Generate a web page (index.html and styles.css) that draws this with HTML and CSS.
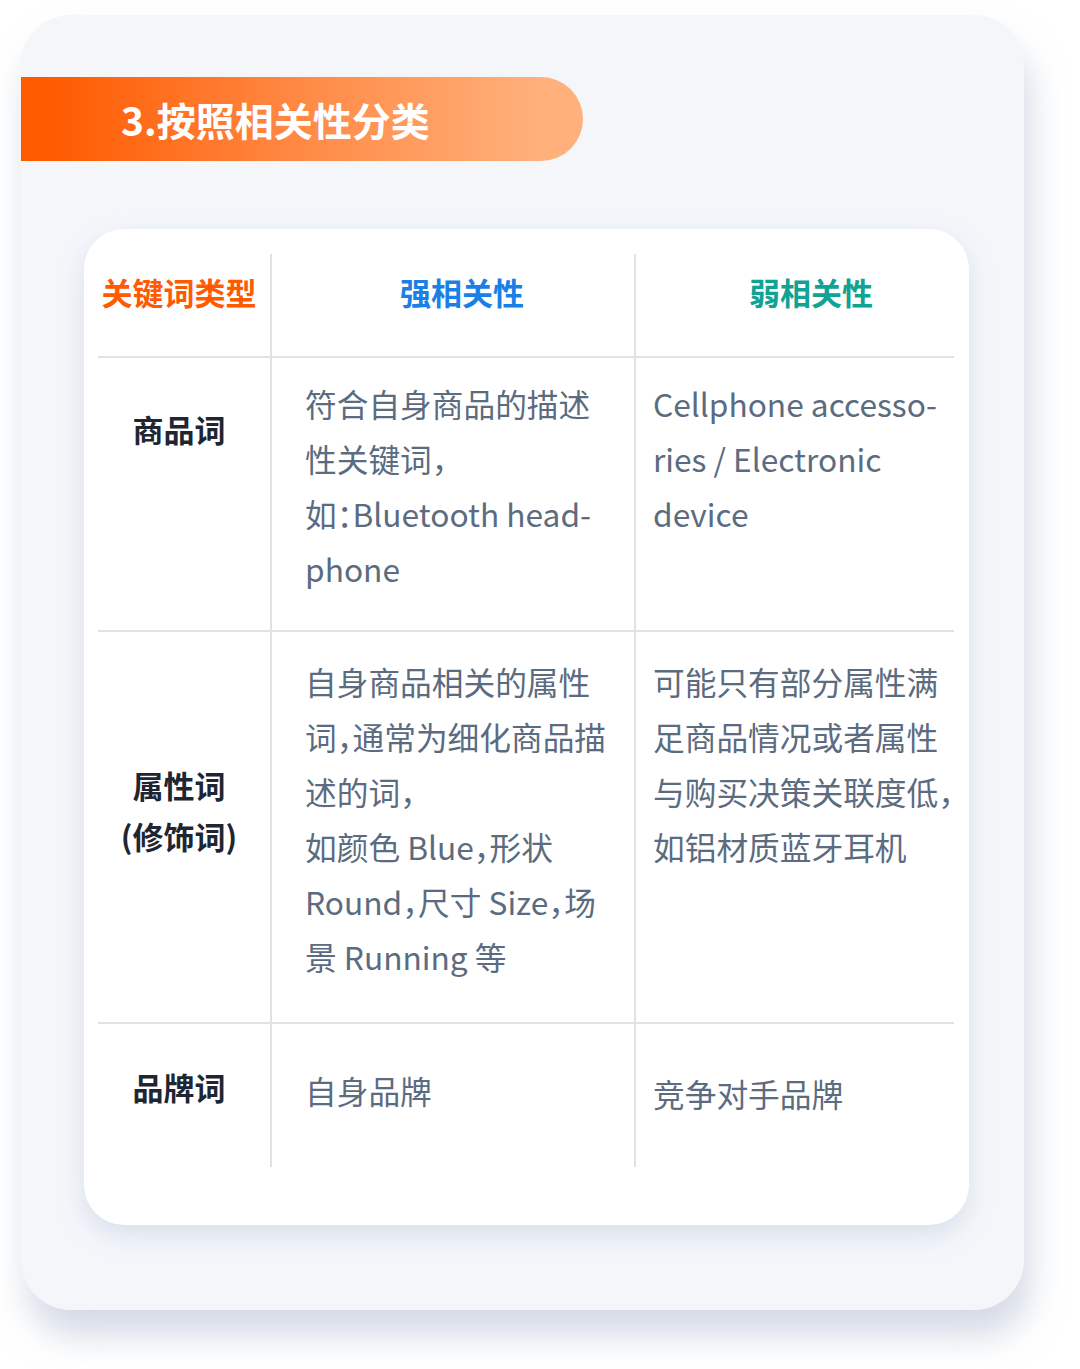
FILE: index.html
```html
<!DOCTYPE html>
<html lang="zh-CN">
<head>
  <meta charset="UTF-8">
  <title>按照相关性分类</title>
  <link rel="stylesheet" href="styles.css">
</head>
<body>

<div class="card">
  <div class="banner">3.按照相关性分类</div>

  <div class="panel">
    <div class="grid">
      <div class="cell head key">关键词类型</div>
      <div class="cell head strong">强相关性</div>
      <div class="cell head weak">弱相关性</div>

      <div class="cell label row1">商品词</div>
      <div class="cell text mid row1">符合自身商品的描述<br>性关键词，<br>如：Bluetooth head-<br>phone</div>
      <div class="cell text end row1">Cellphone accesso-<br>ries / Electronic<br>device</div>

      <div class="cell label row2">属性词<br>(修饰词)</div>
      <div class="cell text mid row2">自身商品相关的属性<br>词，通常为细化商品描<br>述的词，<br>如颜色 Blue，形状<br>Round，尺寸 Size，场<br>景 Running 等</div>
      <div class="cell text end row2">可能只有部分属性满<br>足商品情况或者属性<br>与购买决策关联度低，<br>如铝材质蓝牙耳机</div>

      <div class="cell label row3">品牌词</div>
      <div class="cell text mid row3">自身品牌</div>
      <div class="cell text end row3 low">竞争对手品牌</div>
    </div>
  </div>
</div>

</body>
</html>
```

FILE: styles.css
```css
* {
  box-sizing: border-box;
}

body {
  margin: 0;
  padding-bottom: 60px;
  background: #ffffff;
  font-family: "Noto Sans CJK SC", "Noto Sans", sans-serif;
}

.card {
  margin: 15px 0 0 21px;
  width: 1003px;
  height: 1295px;
  background: #f4f6fa;
  border-radius: 50px;
  padding: 62px 0 0 0;
  box-shadow: 6px 26px 34px rgba(176, 188, 210, 0.55);
}

.banner {
  width: 562px;
  height: 84px;
  padding-left: 100px;
  border-radius: 0 42px 42px 0;
  background: linear-gradient(90deg, #ff5a00 5%, #ff8a45 50%, #ffb07b 92%);
  color: #ffffff;
  font-size: 39px;
  font-weight: 700;
  line-height: 84px;
}

.panel {
  margin: 68px 0 0 63px;
  width: 885px;
  height: 996px;
  background: #ffffff;
  border-radius: 40px;
  padding: 25px 15px 0 14px;
  box-shadow: 0 10px 24px rgba(170, 184, 212, 0.35);
}

.grid {
  display: grid;
  grid-template-columns: 174px 364px 318px;
  grid-template-rows: 102px 274px 392px 145px;
}

.cell {
  border-right: 2px solid #e2e2e2;
}

.cell:nth-child(3n) {
  border-right: none;
}

.cell:nth-child(n+4) {
  border-top: 2px solid #e2e2e2;
}

.head {
  padding-top: 18px;
  font-size: 31px;
  font-weight: 700;
  line-height: 40px;
  text-align: center;
}

.key {
  color: #ff5a00;
  padding-right: 10px;
}

.strong {
  color: #1a80e5;
  padding-left: 18px;
}

.weak {
  color: #10a293;
  padding-left: 32px;
}

.label {
  padding-right: 10px;
  color: #1d2631;
  font-size: 31px;
  font-weight: 700;
  line-height: 51px;
  text-align: center;
}

.text {
  color: #5b6b80;
  font-size: 31.7px;
  line-height: 55px;
  white-space: nowrap;
  font-feature-settings: "halt";
}

.mid {
  padding-left: 33px;
}

.end {
  padding-left: 17px;
}

.label.row1 {
  padding-top: 45px;
}

.label.row2 {
  padding-top: 127px;
}

.label.row3 {
  padding-top: 37px;
}

.text.row1 {
  padding-top: 18px;
}

.text.row2 {
  padding-top: 22px;
}

.text.row3 {
  padding-top: 39px;
}

.text.row3.low {
  padding-top: 42px;
}
```
